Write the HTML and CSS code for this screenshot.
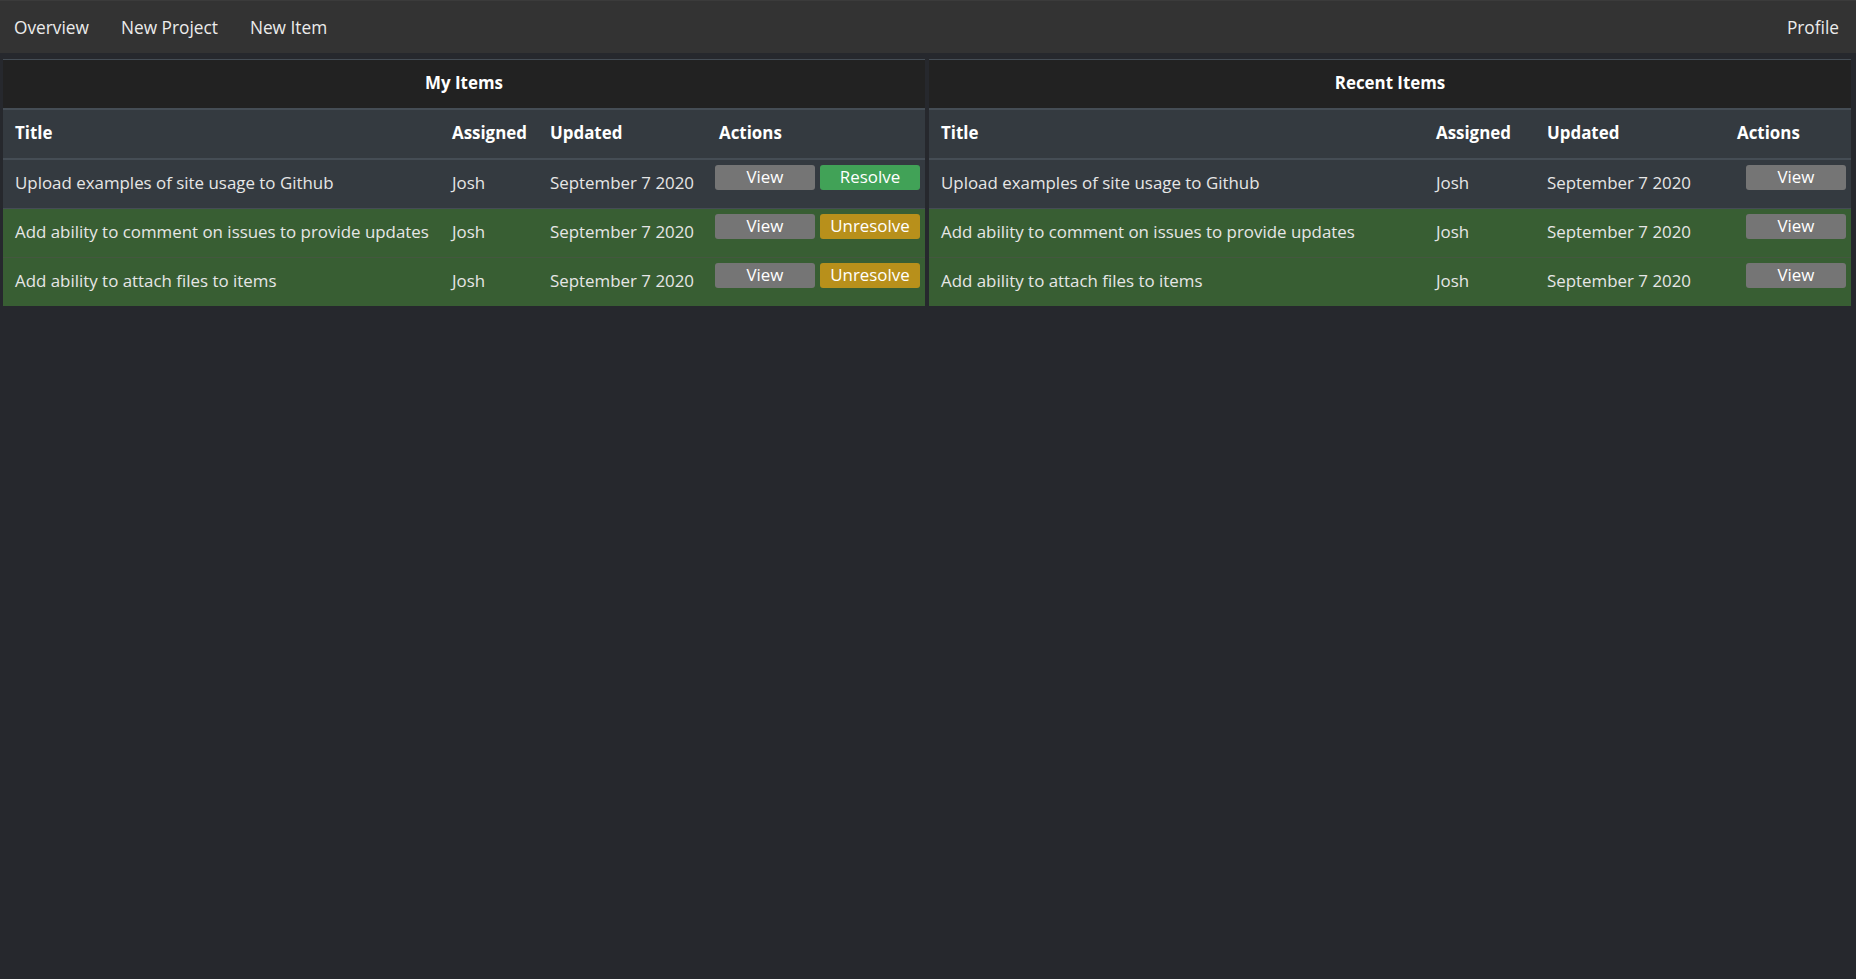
FILE: index.html
```html
<!DOCTYPE html>
<html lang="en">
<head>
<meta charset="utf-8">
<title>Items</title>
<link rel="stylesheet" href="styles.css">
</head>
<body>
<nav class="navbar">
  <div class="nav-left">
    <a class="nav-link" href="#">Overview</a>
    <a class="nav-link" href="#">New Project</a>
    <a class="nav-link" href="#">New Item</a>
  </div>
  <a class="nav-link" href="#">Profile</a>
</nav>
<main class="panels">
  <section class="panel">
    <table class="items items-mine">
      <colgroup>
        <col class="c-title"><col class="c-assigned"><col class="c-updated"><col class="c-actions">
      </colgroup>
      <thead>
        <tr class="panel-title"><th colspan="4">My Items</th></tr>
        <tr class="col-heads"><th>Title</th><th>Assigned</th><th>Updated</th><th>Actions</th></tr>
      </thead>
      <tbody>
        <tr>
          <td>Upload examples of site usage to Github</td><td>Josh</td><td>September 7 2020</td>
          <td class="actions"><button class="btn btn-view">View</button><button class="btn btn-resolve">Resolve</button></td>
        </tr>
        <tr class="resolved">
          <td>Add ability to comment on issues to provide updates</td><td>Josh</td><td>September 7 2020</td>
          <td class="actions"><button class="btn btn-view">View</button><button class="btn btn-unresolve">Unresolve</button></td>
        </tr>
        <tr class="resolved">
          <td>Add ability to attach files to items</td><td>Josh</td><td>September 7 2020</td>
          <td class="actions"><button class="btn btn-view">View</button><button class="btn btn-unresolve">Unresolve</button></td>
        </tr>
      </tbody>
    </table>
  </section>
  <section class="panel">
    <table class="items items-recent">
      <colgroup>
        <col class="c-title"><col class="c-assigned"><col class="c-updated"><col class="c-actions">
      </colgroup>
      <thead>
        <tr class="panel-title"><th colspan="4">Recent Items</th></tr>
        <tr class="col-heads"><th>Title</th><th>Assigned</th><th>Updated</th><th>Actions</th></tr>
      </thead>
      <tbody>
        <tr>
          <td>Upload examples of site usage to Github</td><td>Josh</td><td>September 7 2020</td>
          <td class="actions"><button class="btn btn-view">View</button></td>
        </tr>
        <tr class="resolved">
          <td>Add ability to comment on issues to provide updates</td><td>Josh</td><td>September 7 2020</td>
          <td class="actions"><button class="btn btn-view">View</button></td>
        </tr>
        <tr class="resolved">
          <td>Add ability to attach files to items</td><td>Josh</td><td>September 7 2020</td>
          <td class="actions"><button class="btn btn-view">View</button></td>
        </tr>
      </tbody>
    </table>
  </section>
</main>
</body>
</html>
```
FILE: styles.css
```css
* {
  box-sizing: border-box;
}

html, body {
  margin: 0;
  padding: 0;
}

body {
  background: #26282d;
  min-height: 100vh;
  font-family: "Open Sans", "Noto Sans", "DejaVu Sans", sans-serif;
  font-size: 16.9px;
  line-height: 24px;
  color: #e6e6e6;
}

.navbar {
  height: 53px;
  background: #333333;
  border-top: 1px solid #3b3b3b;
  display: flex;
  align-items: center;
  justify-content: space-between;
  padding: 1px 17px 0 14px;
  font-size: 17.3px;
}

.nav-left {
  display: flex;
  gap: 32px;
}

.nav-link {
  color: #ececec;
  text-decoration: none;
}

.panels {
  display: grid;
  grid-template-columns: 1fr 1fr;
  gap: 4px;
  padding: 6px 5px 0 3px;
}

.panel {
  min-width: 0;
}

.items {
  width: 100%;
  border-collapse: collapse;
  table-layout: fixed;
  background: #343a40;
}

.items th,
.items td {
  padding: 11px 12px 13px;
  text-align: left;
  vertical-align: top;
  white-space: nowrap;
  overflow: hidden;
}

.items th {
  color: #ffffff;
  font-weight: 700;
}

.panel-title th {
  background: #222222;
  text-align: center;
  border-top: 1px solid #454d55;
  border-bottom: 2px solid #454d55;
}

.col-heads th {
  border-bottom: 2px solid #454d55;
}

.items td {
  border-top: 1px solid #454d55;
  color: #e6e6e6;
}

.items tr.resolved {
  background: #385e33;
}

.items tr.resolved + tr.resolved td {
  border-top-color: #44573f;
}

.items td.actions {
  padding: 5px 5px 0 0;
  text-align: right;
}

.items-mine .c-title { width: 437px; }
.items-mine .c-assigned { width: 98px; }
.items-mine .c-updated { width: 169px; }
.items-mine .c-actions { width: 218px; }

.items-recent .c-title { width: 495px; }
.items-recent .c-assigned { width: 111px; }
.items-recent .c-updated { width: 190px; }
.items-recent .c-actions { width: 126px; }

.btn {
  display: inline-block;
  width: 100px;
  height: 25px;
  margin: 0 0 0 5px;
  padding: 0 0 2px;
  border: none;
  border-radius: 3px;
  font-family: inherit;
  font-size: 16.9px;
  line-height: 22px;
  color: #ffffff;
  text-align: center;
  vertical-align: top;
  cursor: pointer;
}

.btn-view {
  background: #757575;
}

.btn-resolve {
  background: #41a257;
}

.btn-unresolve {
  background: #b8901b;
}
```
